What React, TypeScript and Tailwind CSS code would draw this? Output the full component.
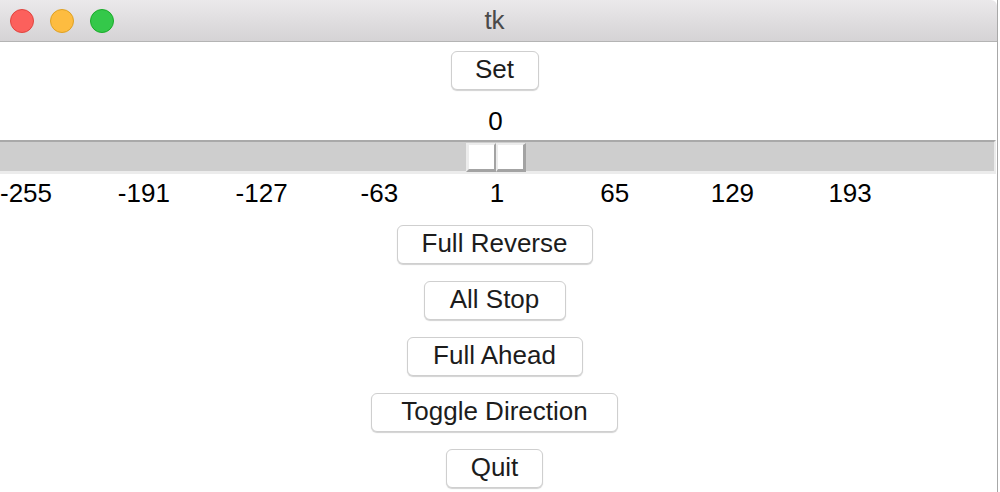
import React from "react";

const labels = [-255, -191, -127, -63, 1, 65, 129, 193];

function centerFor(v: number) {
  return 497 + ((v - 1) / 64) * 117.7;
}

function Btn({ label, w }: { label: string; w: string }) {
  return (
    <div
      className={`${w} h-[39px] flex items-center justify-center pb-[3px] bg-white border border-[#cfcfcf] rounded-[6px] shadow-[0_1px_1px_rgba(0,0,0,0.18)] text-[26px] leading-none text-[#1c1c1c]`}
    >
      {label}
    </div>
  );
}

export default function App() {
  return (
    <div
      className="w-[1000px] h-[492px] bg-white overflow-hidden flex"
      style={{ fontFamily: '"Liberation Sans", Arial, sans-serif' }}
    >
      <div className="w-[998px] h-full border-r border-[#a8a8a8] flex flex-col">
        {/* title bar */}
        <div className="h-[42px] shrink-0 bg-gradient-to-b from-[#ebe9eb] to-[#d5d3d5] border-b border-[#b4b4b4] rounded-tr-[6px] flex items-center relative">
          <div className="flex items-center gap-[16px] pl-[10px]">
            <div className="w-[24px] h-[24px] rounded-full bg-[#fc605c] border border-[#e0443e]" />
            <div className="w-[24px] h-[24px] rounded-full bg-[#fdbc40] border border-[#dea123]" />
            <div className="w-[24px] h-[24px] rounded-full bg-[#34c84a] border border-[#1aab29]" />
          </div>
          <div className="absolute inset-0 flex items-center justify-center pr-[8px] pb-[2px] text-[26px] text-[#4a4a4a] leading-none pointer-events-none">
            tk
          </div>
        </div>

        {/* content */}
        <div className="flex flex-col items-center pt-[9px] pr-[8px]">
          <Btn label="Set" w="w-[88px]" />
          <div className="mt-[16px] h-[30px] leading-[30px] text-[26px] text-black pl-[2px]">0</div>
        </div>

        {/* scale trough */}
        <div className="mt-[4px] relative w-[996px] h-[34px] border-t-2 border-[#a9a9a9] bg-[#cecece] border-b-[3px] border-b-[#ececec] border-r-[2px] border-r-[#ececec]">
          <div className="absolute left-[466px] top-[1px] h-[29px] flex">
            <div className="w-[30px] h-full bg-white border-t-2 border-l-[3px] border-[#ececec] border-b-[3px] border-b-[#a3a3a3] border-r-2 border-r-[#a3a3a3]" />
            <div className="w-[30px] h-full bg-white border-t-2 border-l-2 border-[#ececec] border-b-[3px] border-b-[#a3a3a3] border-r-[3px] border-r-[#a3a3a3]" />
          </div>
        </div>

        {/* labels */}
        <div className="relative h-[51px] w-full">
          {labels.map((v, i) => (
            <div
              key={v}
              className={`absolute top-[4px] leading-[30px] text-[26px] text-black whitespace-nowrap ${i === 0 ? "" : "-translate-x-1/2"}`}
              style={{ left: i === 0 ? 0 : centerFor(v) }}
            >
              {v}
            </div>
          ))}
        </div>

        {/* buttons */}
        <div className="flex flex-col items-center gap-[17px] pr-[8px]">
          <Btn label="Full Reverse" w="w-[196px]" />
          <Btn label="All Stop" w="w-[142px]" />
          <Btn label="Full Ahead" w="w-[176px]" />
          <Btn label="Toggle Direction" w="w-[247px]" />
          <Btn label="Quit" w="w-[97px]" />
        </div>
      </div>
    </div>
  );
}
